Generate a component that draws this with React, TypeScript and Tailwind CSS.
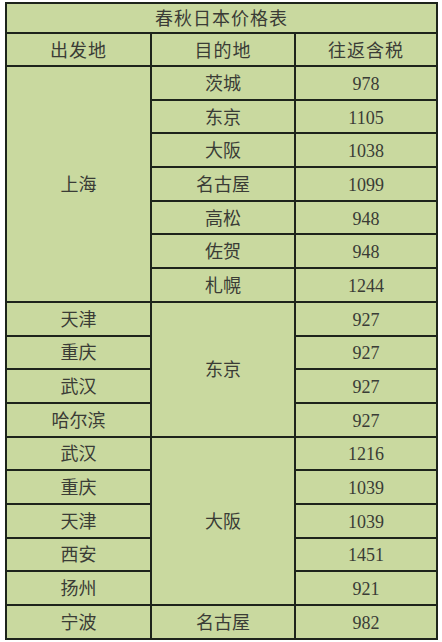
import { Fragment } from "react";

const rows: { from?: string; fromSpan?: number; to?: string; toSpan?: number; price: string }[] = [
  { from: "上海", fromSpan: 7, to: "茨城", price: "978" },
  { to: "东京", price: "1105" },
  { to: "大阪", price: "1038" },
  { to: "名古屋", price: "1099" },
  { to: "高松", price: "948" },
  { to: "佐贺", price: "948" },
  { to: "札幌", price: "1244" },
  { from: "天津", to: "东京", toSpan: 4, price: "927" },
  { from: "重庆", price: "927" },
  { from: "武汉", price: "927" },
  { from: "哈尔滨", price: "927" },
  { from: "武汉", to: "大阪", toSpan: 5, price: "1216" },
  { from: "重庆", price: "1039" },
  { from: "天津", price: "1039" },
  { from: "西安", price: "1451" },
  { from: "扬州", price: "921" },
  { from: "宁波", to: "名古屋", price: "982" },
];

const spanClass: Record<number, string> = {
  1: "",
  4: "row-span-4",
  5: "row-span-5",
  7: "row-span-7",
};

function Cell({ children, className = "" }: { children: React.ReactNode; className?: string }) {
  return (
    <div className={`flex items-center justify-center bg-[#c9d99f] pt-[2px] ${className}`}>
      {children}
    </div>
  );
}

export default function App() {
  return (
    <div className="min-h-screen bg-white pt-[2px] pl-[5px]">
      <div
        className="grid w-[433px] grid-cols-[143px_142px_140px] grid-rows-[28px_31px_repeat(17,31.7px)] gap-[2px] bg-[#1d241b] p-[2px] text-[18px] leading-none text-[#3a3c36]"
        style={{ fontFamily: '"Liberation Serif", "Noto Sans CJK SC", serif' }}
      >
        <Cell className="col-span-3 tracking-[1px]">春秋日本价格表</Cell>
        <Cell className="tracking-[1px]">出发地</Cell>
        <Cell className="tracking-[1px]">目的地</Cell>
        <Cell className="tracking-[1px]">往返含税</Cell>
        {rows.map((r, i) => (
          <Fragment key={i}>
            {r.from && <Cell className={spanClass[r.fromSpan ?? 1]}>{r.from}</Cell>}
            {r.to && <Cell className={spanClass[r.toSpan ?? 1]}>{r.to}</Cell>}
            <Cell>{r.price}</Cell>
          </Fragment>
        ))}
      </div>
    </div>
  );
}
